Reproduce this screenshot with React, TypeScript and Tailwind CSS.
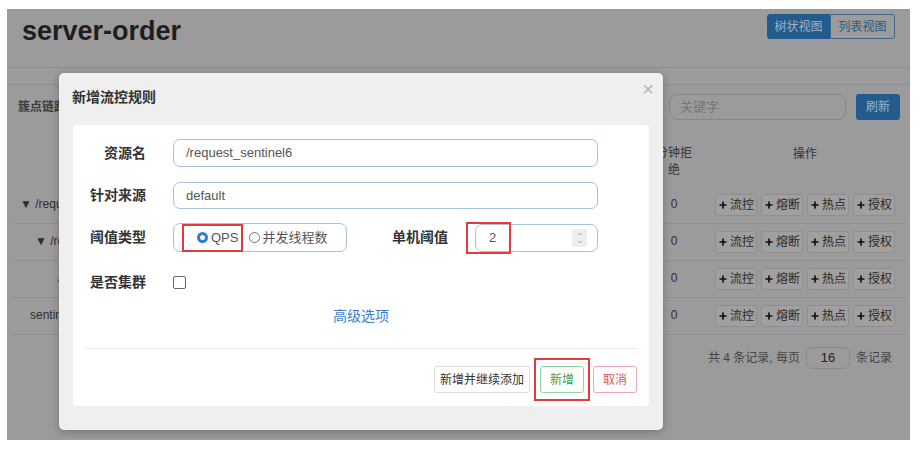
import { Plus, ChevronUp, ChevronDown } from 'lucide-react'

// dimmed page behind the dialog
const rows = [
  { name: '▼ /request_sentinel6', pad: 'pl-[8px]' },
  { name: '▼ /request_sentinel6', pad: 'pl-[23px]' },
  { name: '/request_sentinel6', pad: 'pl-[46px]' },
  { name: 'sentinel_default_context', pad: 'pl-[18px]' },
]

const ops = ['流控', '熔断', '热点', '授权']

function OpButton({ label }: { label: string }) {
  return (
    <div className="w-[42px] h-[22px] flex items-center justify-center gap-[2px] border border-[#8e8e8e] rounded-[3px] bg-[#a0a0a0] text-[12px] text-[#2a2a2a]">
      <Plus size={10} strokeWidth={4} className="text-[#111]" />
      {label}
    </div>
  )
}

export default function App() {
  return (
    <div className="relative w-[920px] h-[451px] bg-white pt-[9px] pl-[7px] overflow-hidden font-['Liberation_Sans','Noto_Sans_CJK_SC',sans-serif]">
      <div className="w-[903px] h-[431px] bg-[#9b9b9b] flex flex-col">
        {/* header */}
        <div className="h-[59px] border-b border-[#8e8e8e] flex justify-between items-start pl-[15px] pr-[15px]">
          <div className="pt-[6px] text-[27px] leading-[32px] font-bold text-[#1e1e1e]">server-order</div>
          <div className="mt-[5px] flex h-[25px] text-[12px]">
            <div className="w-[63px] flex items-center justify-center bg-[#235c8c] border border-[#235c8c] rounded-l-[3px] text-[#9fb4c8]">树状视图</div>
            <div className="w-[65px] flex items-center justify-center border border-[#3a668f] rounded-r-[3px] text-[#2c5a84]">列表视图</div>
          </div>
        </div>

        {/* panel */}
        <div className="mt-[16px] border-t border-[#8f8f8f] flex-1 flex flex-col">
          <div className="pt-[9px] flex items-center pl-[11px] pr-[10px]">
            <div className="w-[41px] overflow-hidden whitespace-nowrap text-[12px] font-bold text-[#3c3c3c]">簇点链路</div>
            <div className="flex-1" />
            <div className="w-[177px] h-[26px] border border-[#888] rounded-[8px] flex items-center pl-[10px] text-[13px] text-[#777]">关键字</div>
            <div className="ml-[10px] w-[44px] h-[26px] bg-[#235c8c] rounded-[3px] flex items-center justify-center text-[12px] text-[#9fb4c8]">刷新</div>
          </div>

          <div className="mt-[8px] mx-[5px] flex flex-col">
            <div className="h-[59px] flex text-[12px] text-[#333] pt-[17px]">
              <div className="flex-1" />
              <div className="w-[40px] text-center leading-[17px]">分钟拒绝</div>
              <div className="ml-[21px] w-[180px] text-center">操作</div>
              <div className="w-[10px]" />
            </div>
            {rows.map((r, i) => (
              <div key={i} className="h-[37px] border-b border-[#8f8f8f] flex items-start pt-[7px] text-[12px] text-[#2e2e2e]">
                <div className={`w-[47px] overflow-hidden ${r.pad} pt-[1px] whitespace-nowrap`}>{r.name}</div>
                <div className="flex-1" />
                <div className="w-[40px] text-center pt-[1px]">0</div>
                <div className="ml-[21px] w-[180px] flex gap-[4px]">
                  {ops.map((o) => (
                    <OpButton key={o} label={o} />
                  ))}
                </div>
                <div className="w-[10px]" />
              </div>
            ))}
            <div className="mt-[12px] flex items-center text-[12px] text-[#444] pl-[696px]">
              共 4 条记录, 每页
              <div className="mx-[6px] w-[44px] h-[22px] border border-[#8a8a8a] rounded-[6px] flex items-center justify-center text-[13px] text-[#222]">16</div>
              条记录
            </div>
          </div>
        </div>
      </div>

      {/* dialog */}
      <div className="absolute left-[59px] top-[73px] w-[604px] h-[357px] bg-[#efefef] rounded-[5px] shadow-[0_2px_8px_rgba(0,0,0,0.25)]">
        <div className="h-[52px] pl-[13px] pt-[14px] text-[14px] leading-[20px] font-semibold text-[#333]">新增流控规则</div>
        <div className="absolute right-[9px] top-[6px] text-[20px] leading-[20px] text-[#b4b4b4]">×</div>

        <div className="mx-[14px] h-[281px] bg-white rounded-[4px] pt-[14px] flex flex-col">
          <div className="flex items-center h-[28px]">
            <div className="w-[73px] text-right text-[14px] font-bold text-[#333]">资源名</div>
            <div className="ml-[27px] w-[425px] h-[28px] border border-[#a9c1d9] rounded-[7px] flex items-center pl-[12px] text-[13px] text-[#555]">/request_sentinel6</div>
          </div>
          <div className="mt-[15px] flex items-center h-[27px]">
            <div className="w-[73px] text-right text-[14px] font-bold text-[#333]">针对来源</div>
            <div className="ml-[27px] w-[425px] h-[27px] border border-[#a9c1d9] rounded-[7px] flex items-center pl-[12px] text-[13px] text-[#555]">default</div>
          </div>
          <div className="mt-[14px] flex items-center h-[29px]">
            <div className="w-[73px] text-right text-[14px] font-bold text-[#333]">阈值类型</div>
            <div className="relative ml-[27px] w-[174px] h-[29px] border border-[#a9c1d9] rounded-[7px] flex items-center pl-[23px] text-[13px] text-[#555]">
              <span className="w-[11px] h-[11px] rounded-full border-[3px] border-[#2d7bd8] bg-white" />
              <span className="ml-[3px]">QPS</span>
              <span className="ml-[11px] w-[11px] h-[11px] rounded-full border border-[#777]" />
              <span className="ml-[2px]">并发线程数</span>
              <div className="absolute left-[8px] top-[0px] w-[61px] h-[28px] border-2 border-[#e23b3b]" />
            </div>
            <div className="ml-[28px] w-[73px] text-right text-[14px] font-bold text-[#333]">单机阈值</div>
            <div className="relative ml-[27px] w-[123px] h-[28px] border border-[#a9c1d9] rounded-[7px] flex items-center pl-[13px] pr-[10px] text-[13px] text-[#555]">
              <span className="flex-1">2</span>
              <span className="w-[15px] h-[18px] bg-[#eee] rounded-[2px] flex flex-col items-center justify-center text-[#888]">
                <ChevronUp size={8} strokeWidth={2} />
                <ChevronDown size={8} strokeWidth={2} />
              </span>
              <div className="absolute left-[-10px] top-[-3px] w-[45px] h-[32px] border-2 border-[#e23b3b]" />
            </div>
          </div>
          <div className="mt-[16px] flex items-center h-[28px]">
            <div className="w-[73px] text-right text-[14px] font-bold text-[#333]">是否集群</div>
            <div className="ml-[27px] w-[13px] h-[13px] border-[1.5px] border-[#666] rounded-[2px]" />
          </div>
          <div className="mt-[10px] text-center text-[14px] leading-[20px] text-[#3b7dc4]">高级选项</div>
          <div className="mt-[22px] mx-[13px] border-t border-[#e6e6e6]" />
          <div className="pt-[17px] px-[12px] flex justify-end items-center text-[12px]">
            <div className="w-[96px] h-[27px] border border-[#ddd] rounded-[3px] flex items-center justify-center text-[#333]">新增并继续添加</div>
            <div className="relative ml-[10px]">
              <div className="w-[44px] h-[27px] border border-[#93d3a2] rounded-[3px] flex items-center justify-center text-[#3f9c52]">新增</div>
              <div className="absolute left-[-6px] top-[-8px] w-[56px] h-[43px] border-2 border-[#e23b3b]" />
            </div>
            <div className="ml-[9px] w-[44px] h-[27px] border border-[#f0a9b0] rounded-[3px] flex items-center justify-center text-[#e05462]">取消</div>
          </div>
        </div>
      </div>
    </div>
  )
}
